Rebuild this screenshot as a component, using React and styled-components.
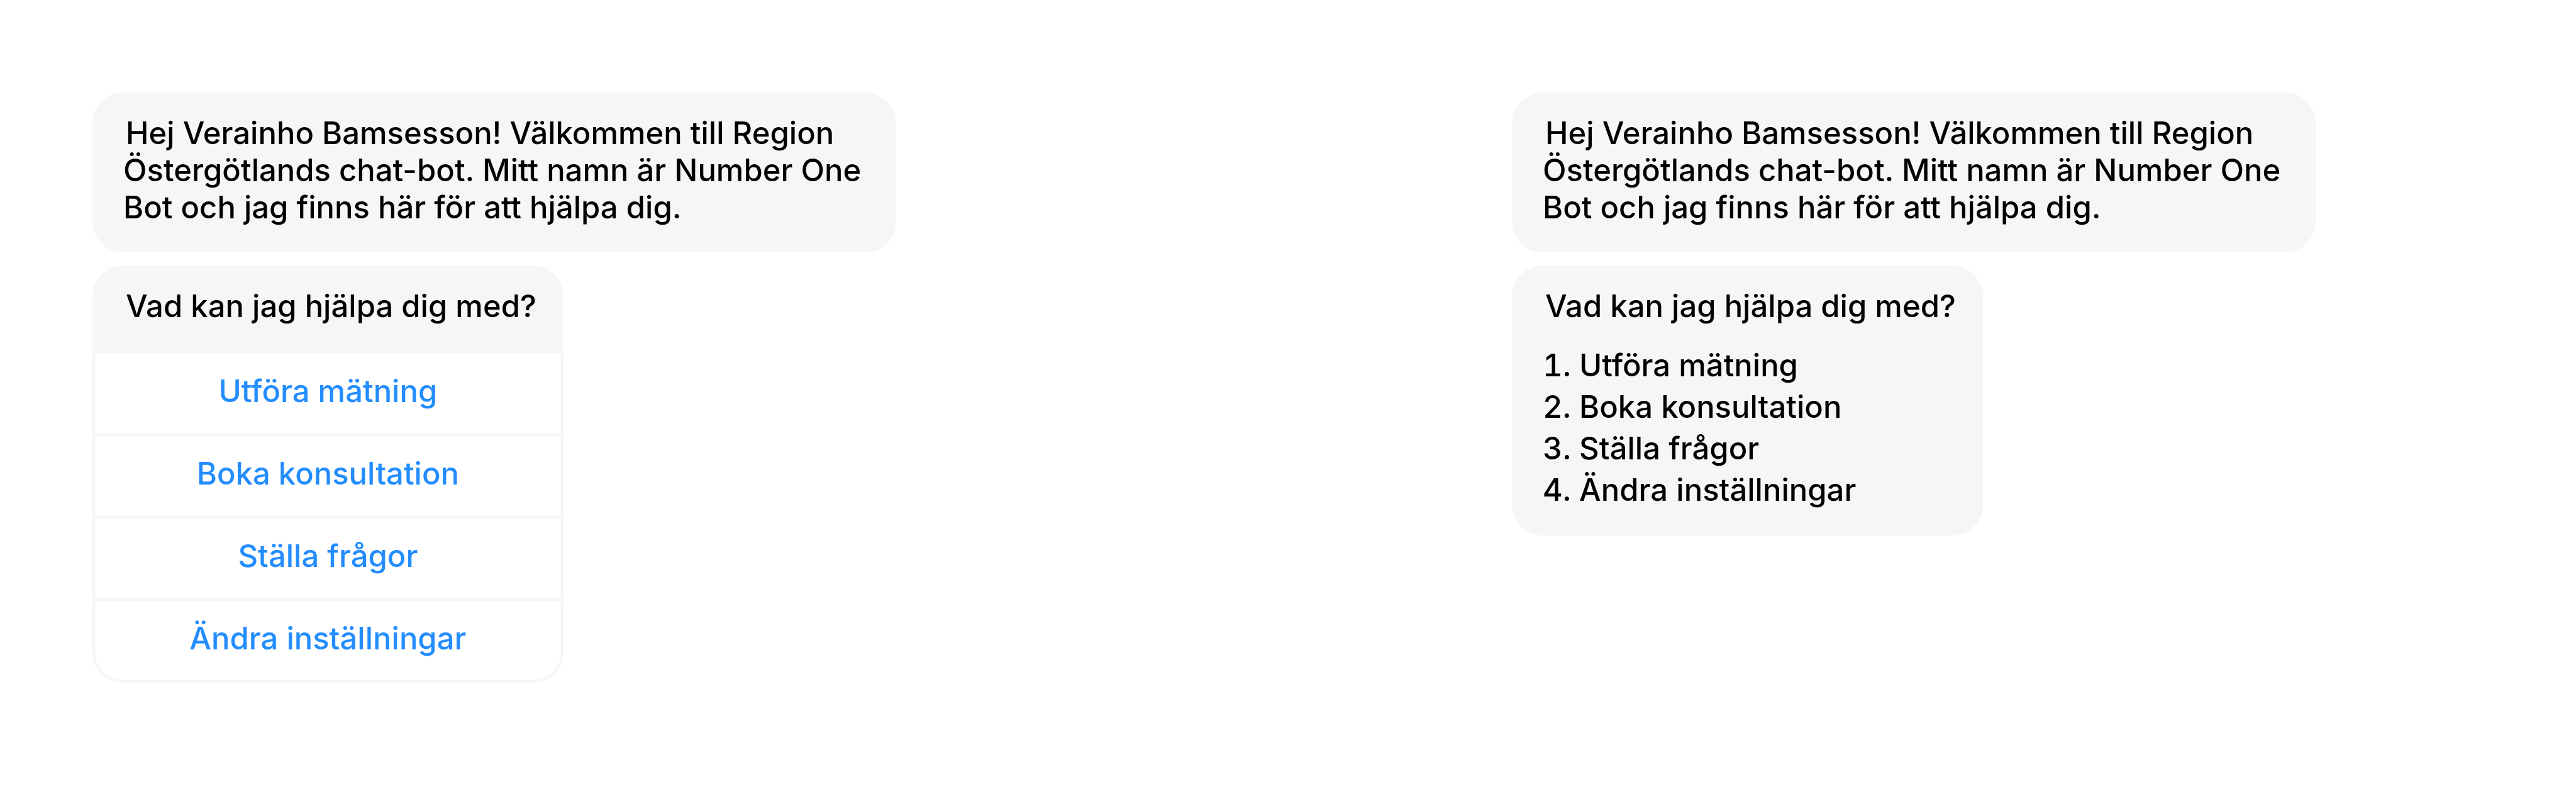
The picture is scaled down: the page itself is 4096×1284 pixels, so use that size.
import React from "react";
import styled, { createGlobalStyle } from "styled-components";

const GlobalStyle = createGlobalStyle`
  *, *::before, *::after { box-sizing: border-box; }
  body {
    margin: 0;
    background: #ffffff;
    color: #000000;
    font-family: Inter, "Liberation Sans", sans-serif;
    font-size: 49px;
    font-weight: 500;
    line-height: 59px;
  }
`;

const Page = styled.main`
  display: grid;
  grid-template-columns: 1fr 1fr;
  column-gap: 712px;
  align-items: start;
  padding: 147px;
`;

const Conversation = styled.section`
  display: flex;
  flex-direction: column;
  align-items: flex-start;
  gap: 21px;
`;

const Bubble = styled.div`
  max-width: ${(p) => (p.$wide ? "1278px" : "none")};
  padding: 35px 43px 42px 49px;
  border-radius: 49px;
  background: #f6f6f6;
`;

const Message = styled.p`
  margin: 0;
  text-indent: 4px;
`;

const Card = styled.div`
  overflow: hidden;
  border: 4px solid #f6f6f6;
  border-radius: 49px;
  background: #ffffff;
`;

const CardHeader = styled.div`
  padding: 31px 39px 46px 45px;
  background: #f6f6f6;
`;

const Options = styled.div`
  display: flex;
  flex-direction: column;
  gap: 5px;
  background: #f6f6f6;
`;

const OptionButton = styled.button`
  padding: 30px 39px 37px;
  border: 0;
  background: #ffffff;
  color: #238dff;
  font: inherit;
  text-align: center;
  cursor: pointer;
`;

const NumberedList = styled.ol`
  display: flex;
  flex-direction: column;
  gap: 7px;
  margin: 0;
  padding: 35px 0 1px;
  list-style: none;
  font-variant-numeric: tabular-nums;
`;

const options = [
  "Utföra mätning",
  "Boka konsultation",
  "Ställa frågor",
  "Ändra inställningar",
];

const greeting =
  "Hej Verainho Bamsesson! Välkommen till Region Östergötlands chat-bot. Mitt namn är Number One Bot och jag finns här för att hjälpa dig.";
const question = "Vad kan jag hjälpa dig med?";

export default function App() {
  return (
    <>
      <GlobalStyle />
      <Page>
        <Conversation>
          <Bubble $wide>
            <Message>{greeting}</Message>
          </Bubble>
          <Card>
            <CardHeader>
              <Message>{question}</Message>
            </CardHeader>
            <Options>
              {options.map((option) => (
                <OptionButton key={option} type="button">
                  {option}
                </OptionButton>
              ))}
            </Options>
          </Card>
        </Conversation>
        <Conversation>
          <Bubble $wide>
            <Message>{greeting}</Message>
          </Bubble>
          <Bubble>
            <Message>{question}</Message>
            <NumberedList>
              {options.map((option, index) => (
                <li key={option}>
                  {index + 1}. {option}
                </li>
              ))}
            </NumberedList>
          </Bubble>
        </Conversation>
      </Page>
    </>
  );
}
